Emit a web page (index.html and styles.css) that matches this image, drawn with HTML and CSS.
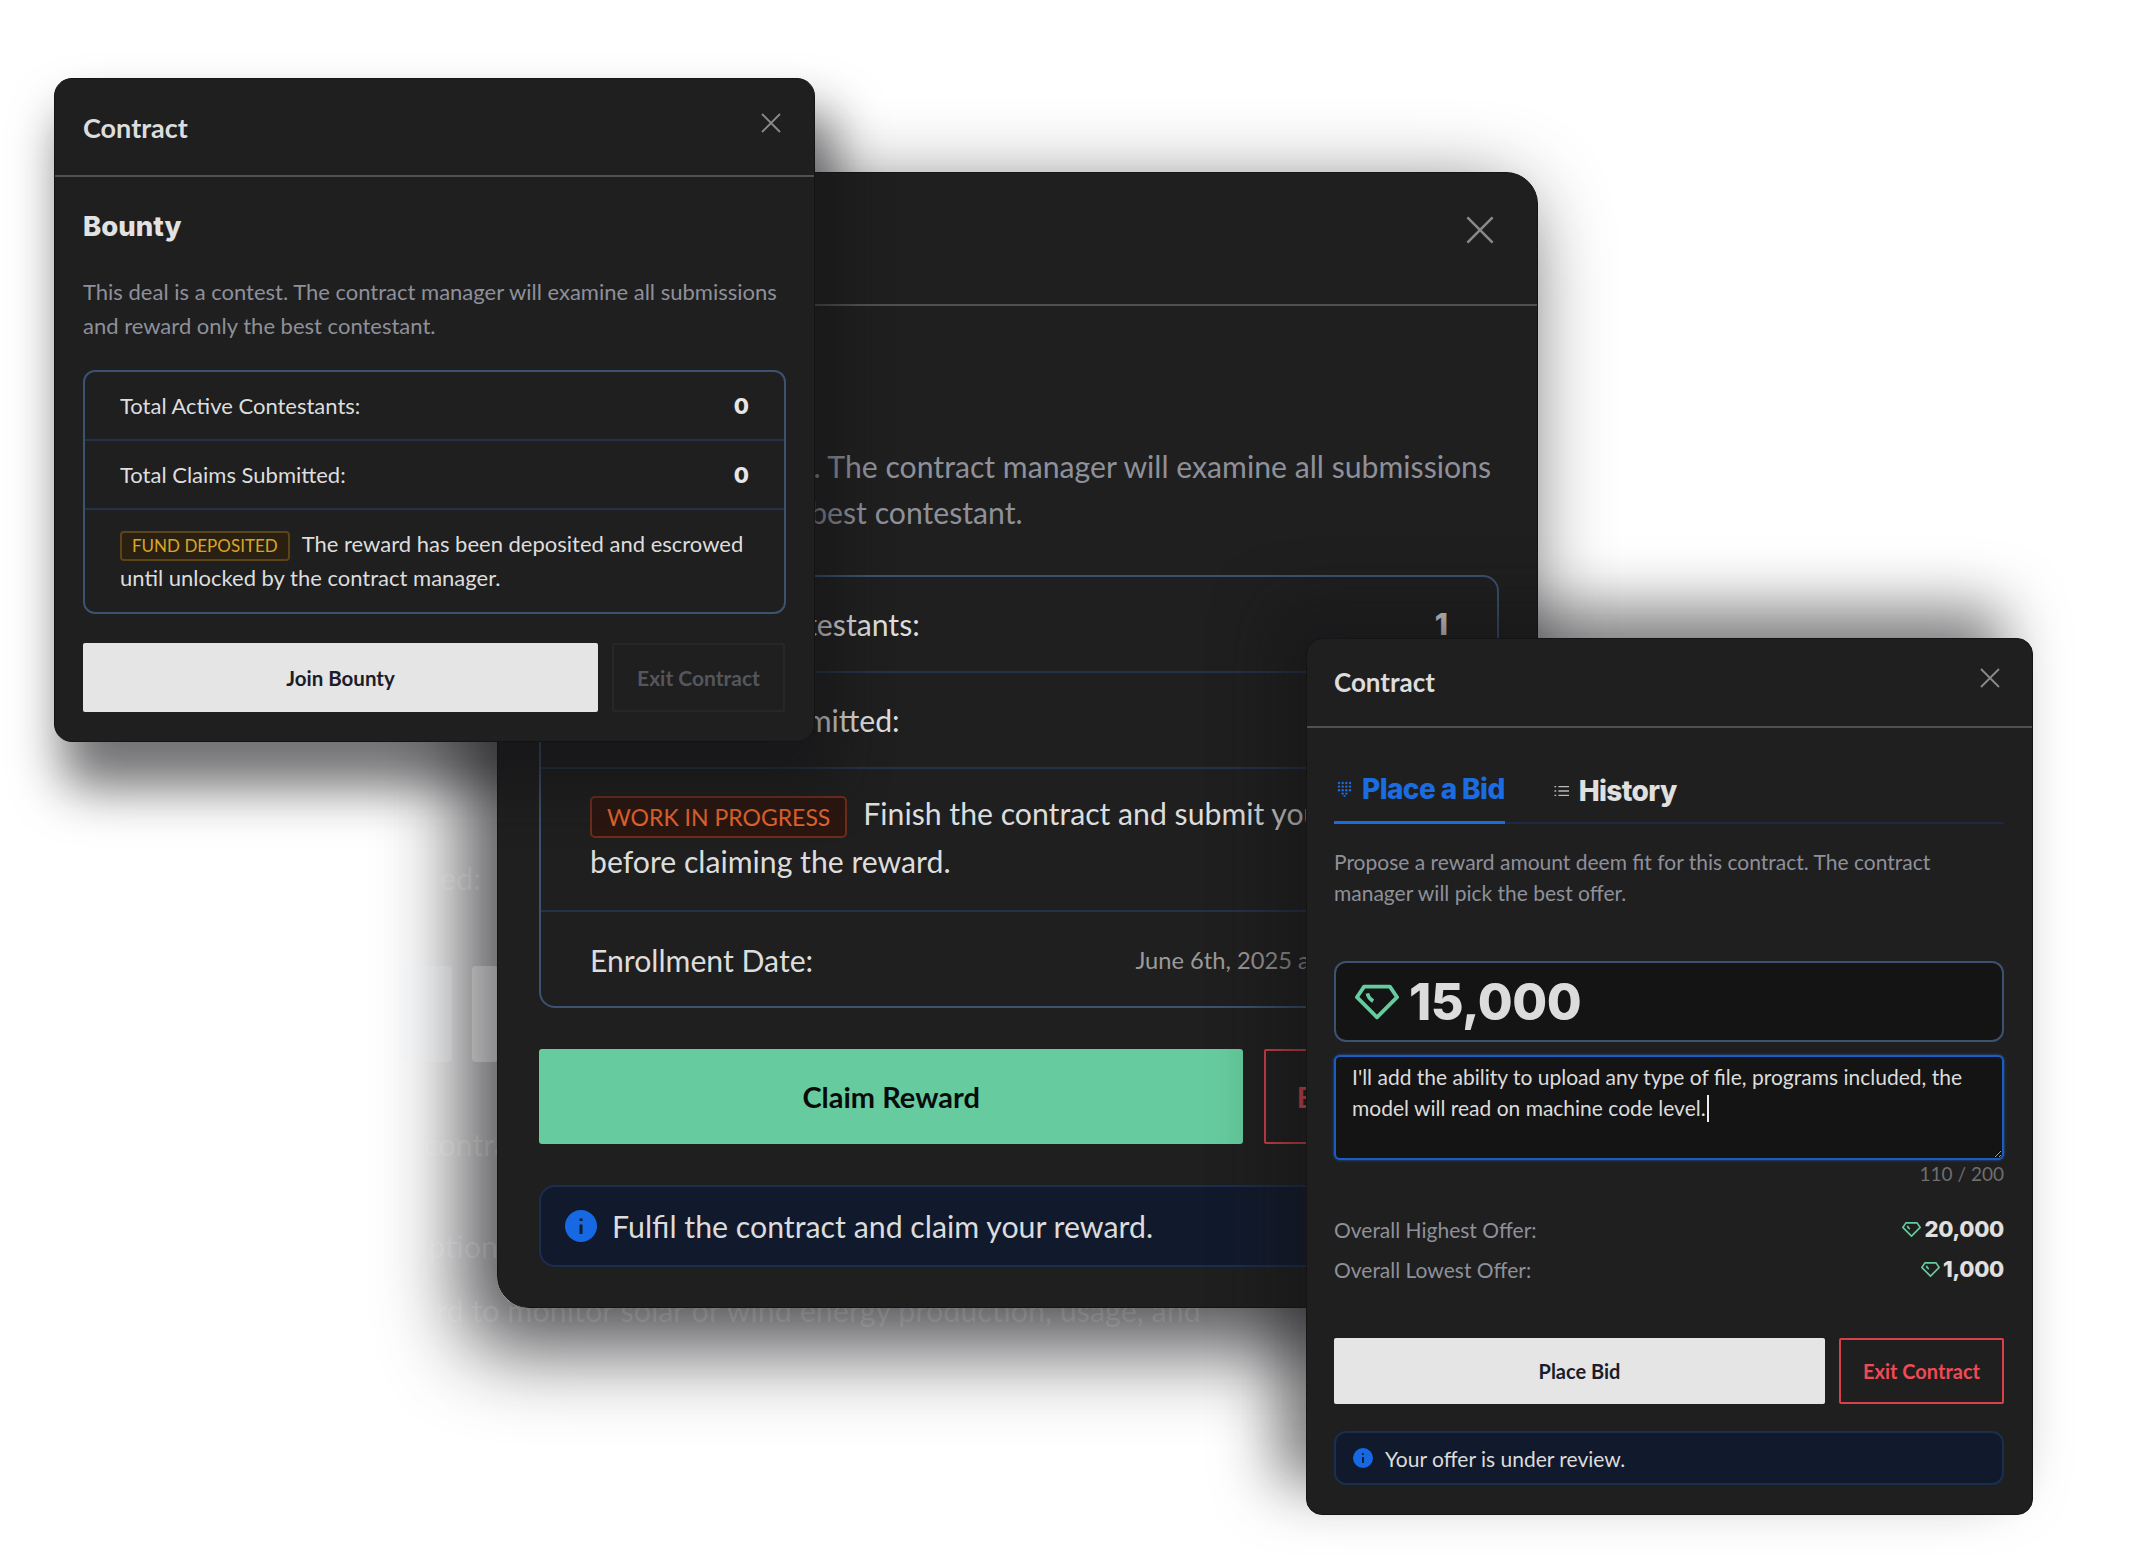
FILE: index.html
```html
<!DOCTYPE html>
<html lang="en">
<head>
<meta charset="UTF-8">
<title>Contract</title>
<link rel="stylesheet" href="styles.css">
</head>
<body>
<div class="stage">
  <div class="main-shadow"></div>

  <!-- page behind the modals, only visible over the shadow -->
  <div class="ghost ghost-text ghost-a">ed:</div>
  <div class="ghost ghost-btn ghost-btn-a"></div>
  <div class="ghost ghost-btn ghost-btn-b"></div>
  <div class="ghost ghost-text ghost-b">contra</div>
  <div class="ghost ghost-text ghost-c">ption</div>
  <div class="ghost ghost-text ghost-d">rd to monitor solar or wind energy production, usage, and</div>

  <!-- main modal -->
  <section class="modal modal-main">
    <header class="modal-head">
      <h2 class="modal-title">Contract</h2>
      <svg class="close" viewBox="0 0 20 20"><path d="M1 1 19 19M19 1 1 19"/></svg>
    </header>
    <div class="modal-body">
      <h3 class="deal">Bounty</h3>
      <p class="desc">This deal is a contest. The contract manager will examine all submissions<br>and reward only the best contestant.</p>
      <div class="stats">
        <div class="stat"><span>Total Active Contestants:</span><b>1</b></div>
        <div class="stat"><span>Total Claims Submitted:</span><b>0</b></div>
        <div class="stat stat-note"><span class="badge badge-wip">WORK IN PROGRESS</span>Finish the contract and submit your work<br>before claiming the reward.</div>
        <div class="stat"><span>Enrollment Date:</span><em>June 6th, 2025 at 1:30:00 AM</em></div>
      </div>
      <div class="actions">
        <button class="btn btn-claim">Claim Reward</button>
        <button class="btn btn-exit">Exit Contract</button>
      </div>
      <div class="notice">
        <svg class="info" viewBox="0 0 32 32"><circle cx="16" cy="16" r="16"/><path class="info-i" d="M16 14.500V24M16 8.500v2.500"/></svg>
        <span>Fulfil the contract and claim your reward.</span>
      </div>
    </div>
  </section>

  <!-- join modal -->
  <section class="modal modal-join">
    <header class="modal-head">
      <h2 class="modal-title">Contract</h2>
      <svg class="close" viewBox="0 0 20 20"><path d="M1 1 19 19M19 1 1 19"/></svg>
    </header>
    <div class="modal-body">
      <h3 class="deal">Bounty</h3>
      <p class="desc">This deal is a contest. The contract manager will examine all submissions<br>and reward only the best contestant.</p>
      <div class="stats">
        <div class="stat"><span>Total Active Contestants:</span><b>0</b></div>
        <div class="stat"><span>Total Claims Submitted:</span><b>0</b></div>
        <div class="stat stat-note"><span class="badge badge-fund">FUND DEPOSITED</span>The reward has been deposited and escrowed<br>until unlocked by the contract manager.</div>
      </div>
      <div class="actions">
        <button class="btn btn-light">Join Bounty</button>
        <button class="btn btn-off">Exit Contract</button>
      </div>
    </div>
  </section>

  <!-- bid modal -->
  <section class="modal modal-bid">
    <header class="modal-head">
      <h2 class="modal-title">Contract</h2>
      <svg class="close" viewBox="0 0 20 20"><path d="M1 1 19 19M19 1 1 19"/></svg>
    </header>
    <div class="modal-body">
      <nav class="tabs">
        <a class="tab tab-active">
          <svg class="tab-icon" viewBox="0 0 15 16"><g class="dots"><circle cx="2" cy="2" r="1.2"/><circle cx="5.700" cy="2" r="1.2"/><circle cx="9.300" cy="2" r="1.2"/><circle cx="13" cy="2" r="1.2"/><circle cx="2" cy="5.600" r="1.2"/><circle cx="5.700" cy="5.600" r="1.2"/><circle cx="9.300" cy="5.600" r="1.2"/><circle cx="13" cy="5.600" r="1.2"/><circle cx="2" cy="9.200" r="1.2"/><circle cx="5.700" cy="9.200" r="1.2"/><circle cx="9.300" cy="9.200" r="1.2"/><circle cx="13" cy="9.200" r="1.2"/><circle cx="5.700" cy="12.600" r="1.2"/><circle cx="9.300" cy="12.600" r="1.2"/><circle cx="7.500" cy="15" r="1"/></g></svg>
          Place a Bid
        </a>
        <a class="tab">
          <svg class="tab-icon" viewBox="0 0 17 14"><path d="M5 2h12M5 7h12M5 12h12M.5 2h2M.5 7h2M.5 12h2"/></svg>
          History
        </a>
      </nav>
      <p class="desc">Propose a reward amount deem fit for this contract. The contract<br>manager will pick the best offer.</p>
      <div class="amount">
        <svg class="gem gem-lg" viewBox="0 0 46 36"><path d="M2 13 9.500 2H36.500L44 13 23 34Z"/><path d="M13 9c.6 3 2.500 6 6 8"/></svg>
        <span>15,000</span>
      </div>
      <div class="note">I'll add the ability to upload any type of file, programs included, the<br>model will read on machine code level.<span class="caret"></span></div>
      <div class="count">110 / 200</div>
      <div class="offers">
        <div class="offer"><span>Overall Highest Offer:</span><b><svg class="gem" viewBox="0 0 46 36"><path d="M2 13 9.500 2H36.500L44 13 23 34Z"/><path d="M13 9c.6 3 2.500 6 6 8"/></svg>20,000</b></div>
        <div class="offer"><span>Overall Lowest Offer:</span><b><svg class="gem" viewBox="0 0 46 36"><path d="M2 13 9.500 2H36.500L44 13 23 34Z"/><path d="M13 9c.6 3 2.500 6 6 8"/></svg>1,000</b></div>
      </div>
      <div class="actions">
        <button class="btn btn-light">Place Bid</button>
        <button class="btn btn-exit">Exit Contract</button>
      </div>
      <div class="notice">
        <svg class="info" viewBox="0 0 32 32"><circle cx="16" cy="16" r="16"/><path class="info-i" d="M16 14.500V24M16 8.500v2.500"/></svg>
        <span>Your offer is under review.</span>
      </div>
    </div>
  </section>
</div>
</body>
</html>
```

FILE: styles.css
```css
* {
  box-sizing: border-box;
}
body {
  margin: 0;
  background: #fff;
  font-family: "Lato", "Liberation Sans", sans-serif;
  color-scheme: dark;
}
.stage {
  position: relative;
  width: 2136px;
  height: 1555px;
  overflow: hidden;
  background: #fff;
}

/* leftovers of the page behind */
.main-shadow {
  position: absolute;
  left: 497px;
  top: 172px;
  width: 1041px;
  height: 1136px;
  border-radius: 32px;
  box-shadow: -24px 32px 80px 10px rgba(20, 20, 24, 0.72);
}
.ghost {
  position: absolute;
}
.ghost-text {
  font-size: 30.500px;
  line-height: 40px;
  color: rgba(255, 255, 255, 0.1);
  white-space: nowrap;
}
.ghost-a { left: 440px; top: 858px; }
.ghost-b { left: 424px; top: 1124px; }
.ghost-c { left: 428px; top: 1226px; }
.ghost-d { left: 436px; top: 1290px; }
.ghost-btn {
  top: 966px;
  height: 96px;
  border-radius: 4px;
}
.ghost-btn-a { left: 400px; width: 52px; background: rgba(225, 240, 250, 0.14); }
.ghost-btn-b { left: 472px; width: 26px; background: rgba(255, 255, 255, 0.18); }

/* modal frame */
.modal {
  position: absolute;
  background: #1f1f1f;
  border: 1px solid #141414;
  color: #ddd;
}
.modal-main {
  left: 497px;
  top: 172px;
  width: 1041px;
  height: 1136px;
  border-radius: 32px;
}
.modal-join {
  left: 54px;
  top: 78px;
  width: 761px;
  height: 664px;
  border-radius: 18px;
  box-shadow: 14px 40px 50px 6px rgba(20, 20, 24, 0.6);
}
.modal-bid {
  left: 1306px;
  top: 638px;
  width: 727px;
  height: 877px;
  border-radius: 16px;
  box-shadow: -30px -30px 60px 0 rgba(20, 20, 24, 0.55);
}
.modal-head {
  display: flex;
  justify-content: space-between;
  align-items: center;
  border-bottom: 2px solid #505050;
}
.modal-title {
  margin: 0;
  font-weight: 700;
}
.close {
  fill: none;
  stroke: #8a8a8a;
  stroke-width: 1.8;
}
.deal {
  margin: 0;
  font-family: "Inter", "Lato", sans-serif;
  font-weight: 800;
  color: #e2e2e2;
}
.desc {
  margin: 0;
  color: #8e909a;
  white-space: nowrap;
}

/* stats box */
.stats {
  border: 2px solid #3b5270;
}
.stat {
  display: flex;
  justify-content: space-between;
  align-items: center;
  border-bottom: 2px solid #243248;
}
.stat:last-child {
  border-bottom: none;
}
.stat b {
  font-family: "Inter", "Lato", sans-serif;
  font-weight: 800;
  color: #e6e6e6;
}
.stat em {
  font-style: normal;
  color: #9a9a9a;
}
.stat-note {
  display: block;
  white-space: nowrap;
}
.badge {
  display: inline-block;
  border: 2px solid;
  vertical-align: middle;
}
.badge-fund {
  background: #292012;
  border-color: #5b4518;
  color: #d9a528;
}
.badge-wip {
  background: #2b1610;
  border-color: #6c2e1a;
  color: #e2652c;
}

/* buttons */
.actions {
  display: flex;
}
.btn {
  border: none;
  font-family: inherit;
  font-weight: 700;
}
.btn-light {
  background: #e5e5e5;
  color: #1c1c2a;
  border-radius: 2px;
}
.btn-claim {
  background: #66cc9f;
  color: #0b0b0b;
  border-radius: 3px;
}
.btn-exit {
  background: transparent;
  border: 2px solid #d8404a;
  color: #ef4a55;
  border-radius: 2px;
}
.btn-off {
  background: transparent;
  border: 2px solid #272727;
  color: #55565c;
  border-radius: 2px;
}

/* notice */
.notice {
  display: flex;
  align-items: center;
  background: #111a2c;
  border: 2px solid #1a2e50;
  color: #dcdcdc;
}
.info {
  flex: none;
  fill: #1668e3;
}
.info-i {
  fill: none;
  stroke: #111a2c;
  stroke-width: 3;
}

/* join modal sizes */
.modal-join .modal-head {
  height: 98px;
  padding: 0 33px 0 28px;
}
.modal-join .modal-title {
  font-size: 27px;
}
.modal-join .close {
  width: 20px;
  height: 20px;
  margin-bottom: 8px;
}
.modal-join .modal-body {
  padding: 32px 28px 0;
}
.modal-join .deal {
  font-size: 27.500px;
  line-height: 34px;
}
.modal-join .desc {
  margin-top: 32px;
  font-size: 22px;
  line-height: 33.500px;
}
.modal-join .stats {
  margin-top: 28px;
  height: 244px;
  border-radius: 12px;
}
.modal-join .stat {
  height: 69px;
  padding: 0 35px;
  font-size: 22px;
}
.modal-join .stat b {
  font-size: 22px;
}
.modal-join .stat-note {
  height: auto;
  padding: 17px 35px 0;
  line-height: 34px;
}
.modal-join .badge {
  font-size: 17px;
  line-height: 26px;
  padding: 0 10px;
  margin-right: 12px;
  border-radius: 4px;
}
.modal-join .actions {
  margin-top: 29px;
  gap: 14px;
}
.modal-join .btn {
  height: 69px;
  font-size: 20.500px;
}
.modal-join .btn-light {
  width: 515px;
}
.modal-join .btn-off {
  width: 173px;
  font-size: 21px;
}

/* main modal sizes */
.modal-main .modal-head {
  height: 133px;
  padding: 0 43px 0 42px;
}
.modal-main .modal-title {
  font-size: 36px;
}
.modal-main .close {
  width: 28px;
  height: 28px;
  margin-bottom: 17px;
}
.modal-main .modal-body {
  padding: 43px 38px 0 41px;
}
.modal-main .deal {
  font-size: 36px;
  line-height: 52px;
}
.modal-main .desc {
  margin-top: 42px;
  font-size: 30.200px;
  line-height: 46px;
}
.modal-main .stats {
  margin-top: 40px;
  height: 433px;
  border-radius: 16px;
}
.modal-main .stat {
  height: 96px;
  padding: 0 49px;
  font-size: 30.200px;
}
.modal-main .stat b {
  font-size: 30px;
}
.modal-main .stat em {
  font-size: 23.700px;
}
.modal-main .stat-note {
  height: 143px;
  padding: 21px 49px 0;
  line-height: 47px;
}
.modal-main .badge {
  font-size: 23px;
  line-height: 38px;
  padding: 0 15px;
  margin-right: 16px;
  border-radius: 5px;
}
.modal-main .actions {
  margin-top: 41px;
  gap: 21px;
}
.modal-main .btn {
  height: 95px;
  font-size: 29px;
}
.modal-main .btn-claim {
  width: 705px;
}
.modal-main .btn-exit {
  width: 235px;
}
.modal-main .notice {
  margin-top: 41px;
  height: 82px;
  padding: 0 24px;
  gap: 15px;
  font-size: 30.300px;
  border-radius: 16px;
}
.modal-main .info {
  width: 32px;
  height: 32px;
}

/* bid modal sizes */
.modal-bid .modal-head {
  height: 89px;
  padding: 0 32px 0 27px;
}
.modal-bid .modal-title {
  font-size: 26px;
  padding-bottom: 2px;
}
.modal-bid .close {
  width: 20px;
  height: 20px;
  margin-bottom: 10px;
}
.modal-bid .modal-body {
  padding: 44px 28px 0 27px;
}
.tabs {
  display: flex;
  gap: 46px;
  border-bottom: 2px solid #1b2a40;
}
.tab {
  display: flex;
  align-items: center;
  gap: 10px;
  height: 52px;
  margin-bottom: -2px;
  padding: 0 0 15px 3px;
  font-family: "Inter", "Lato", sans-serif;
  font-size: 28px;
  font-weight: 800;
  letter-spacing: -0.6px;
  color: #e0e0e0;
}
.tab-active {
  color: #1a6ce0;
  border-bottom: 3px solid #1a6ce0;
}
.tab-icon {
  width: 15px;
  height: 16px;
  fill: none;
  stroke: #bbb;
  stroke-width: 1.6;
}
.tab .dots {
  fill: #1a6ce0;
  stroke: none;
}
.modal-bid .desc {
  margin-top: 22px;
  font-size: 21px;
  line-height: 31px;
}
.amount {
  display: flex;
  align-items: center;
  gap: 10px;
  margin-top: 53px;
  height: 81px;
  padding: 0 14px 0 19px;
  background: #141414;
  border: 2px solid #3b5270;
  border-radius: 12px;
  font-family: "Inter", "Lato", sans-serif;
  font-size: 50.500px;
  font-weight: 800;
  letter-spacing: -0.5px;
  color: #dcdcdc;
}
.gem {
  width: 19px;
  height: 15px;
  margin-right: 3px;
  fill: none;
  stroke: #66cc9f;
  stroke-width: 4;
  stroke-linejoin: round;
}
.gem-lg {
  width: 44px;
  height: 36px;
  margin: 0;
}
.note {
  margin-top: 13px;
  height: 105px;
  padding: 4px 16px;
  background: #141414;
  border: 2px solid #1a5cc0;
  box-shadow: 0 0 3px #1a5cc0;
  border-radius: 6px;
  font-size: 21px;
  line-height: 31.300px;
  color: #dcdcdc;
  overflow: auto;
  resize: vertical;
}
.caret {
  display: inline-block;
  width: 2px;
  height: 27px;
  margin-left: 1px;
  vertical-align: -6px;
  background: #eee;
}
.count {
  margin-top: 3px;
  text-align: right;
  font-size: 19px;
  line-height: 22px;
  color: #6e6e6e;
}
.offers {
  display: flex;
  flex-direction: column;
  gap: 10px;
  margin-top: 29px;
}
.offer {
  display: flex;
  justify-content: space-between;
  align-items: center;
  height: 30px;
  font-size: 21px;
  color: #8e909a;
}
.offer b {
  display: flex;
  align-items: center;
  font-family: "Inter", "Lato", sans-serif;
  font-size: 22px;
  font-weight: 800;
  letter-spacing: -0.3px;
  color: #e0e0e0;
}
.modal-bid .actions {
  margin-top: 54px;
  gap: 14px;
}
.modal-bid .btn {
  height: 66px;
  font-size: 20px;
}
.modal-bid .btn-light {
  width: 491px;
}
.modal-bid .btn-exit {
  width: 165px;
}
.modal-bid .notice {
  margin-top: 27px;
  height: 54px;
  padding: 0 17px;
  gap: 12px;
  font-size: 21px;
  border-radius: 12px;
}
.modal-bid .info {
  width: 20px;
  height: 20px;
}
```
